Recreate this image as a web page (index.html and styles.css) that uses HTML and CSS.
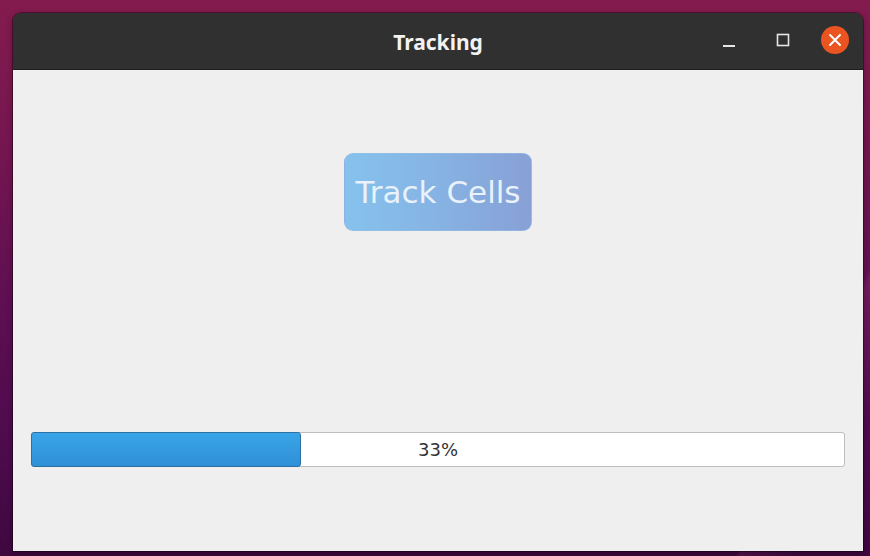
FILE: index.html
```html
<!DOCTYPE html>
<html>
<head>
<meta charset="utf-8">
<link rel="stylesheet" href="styles.css">
</head>
<body>
<div class="desktop">
  <div class="window">
    <div class="titlebar">
      <div class="title">Tracking</div>
      <div class="controls">
        <span class="ctl min"><svg width="14" height="14" viewBox="0 0 14 14"><rect x="1" y="10" width="12" height="2" fill="#e6e6e6"/></svg></span>
        <span class="ctl max"><svg width="14" height="14" viewBox="0 0 14 14"><rect x="1.5" y="1.5" width="11" height="11" fill="none" stroke="#e6e6e6" stroke-width="1.6"/></svg></span>
        <span class="ctl close"><svg width="28" height="28" viewBox="0 0 28 28"><circle cx="14" cy="14" r="14" fill="#e95420"/><path d="M9 9 L19 19 M19 9 L9 19" stroke="#fff" stroke-width="2" stroke-linecap="round"/></svg></span>
      </div>
    </div>
    <div class="content">
      <button class="track-btn">Track Cells</button>
      <div class="progress">
        <div class="chunk" style="width:33.2%"></div>
        <div class="label">33%</div>
      </div>
    </div>
  </div>
</div>
</body>
</html>
```
FILE: styles.css
```css
html, body {
  margin: 0;
  padding: 0;
  width: 870px;
  height: 556px;
  overflow: hidden;
}
.desktop {
  width: 870px;
  height: 556px;
  box-sizing: border-box;
  padding: 13px 7px 0 13px;
  background:
    linear-gradient(115deg, transparent 0%, transparent 88%, rgba(255,120,170,0.10) 88.5%, transparent 94%),
    linear-gradient(180deg, #831b4e 0%, #761650 25%, #5e0f52 55%, #4d0b4e 80%, #3f083f 100%);
}
.window {
  width: 850px;
  height: 538px;
  display: flex;
  flex-direction: column;
  border-radius: 8px 8px 0 0;
  overflow: hidden;
  box-shadow: 0 0 0 1px rgba(0,0,0,0.35), 0 2px 6px rgba(0,0,0,0.35);
}
.titlebar {
  height: 56px;
  background: #303030;
  border-bottom: 1px solid #1f1f1f;
  display: flex;
  align-items: center;
  justify-content: center;
  position: relative;
  flex-shrink: 0;
}
.title {
  color: #f2f2f2;
  font-family: "Noto Sans", "DejaVu Sans", sans-serif;
  font-weight: bold;
  font-size: 21px;
  margin-top: 1px;
}
.controls {
  position: absolute;
  right: 14px;
  top: 13px;
  display: flex;
  align-items: center;
}
.ctl {
  display: flex;
  align-items: center;
  justify-content: center;
}
.min { width: 14px; height: 28px; margin-right: 40px; padding-top: 4px; box-sizing: border-box; }
.max { width: 14px; height: 28px; margin-right: 31px; }
.close { width: 28px; height: 28px; }
.content {
  flex: 1;
  background: #efefef;
  display: flex;
  flex-direction: column;
  align-items: center;
  padding: 0 18px;
}
.track-btn {
  margin-top: 83px;
  width: 188px;
  height: 78px;
  border-radius: 9px;
  border: 1px solid rgba(150,190,230,0.6);
  background: linear-gradient(90deg, #86c2ed 0%, #86b3e3 50%, #88a0d6 100%);
  color: #e9f1fa;
  font-family: "DejaVu Sans", sans-serif;
  font-size: 31px;
  padding: 0;
}
.progress {
  margin-top: 201px;
  align-self: stretch;
  height: 35px;
  box-sizing: border-box;
  background: #ffffff;
  border: 1px solid #bdbdbd;
  border-radius: 3px;
  position: relative;
}
.chunk {
  box-sizing: border-box;
  background: linear-gradient(180deg, #3aa4e8 0%, #2f90d6 100%);
  border: 1px solid #2c6fa3;
  border-radius: 3px;
  margin: -1px 0 0 -1px;
  height: 35px;
}
.label {
  position: absolute;
  inset: 0;
  display: flex;
  align-items: center;
  justify-content: center;
  font-family: "DejaVu Sans", sans-serif;
  font-size: 18px;
  color: #333;
}
```
